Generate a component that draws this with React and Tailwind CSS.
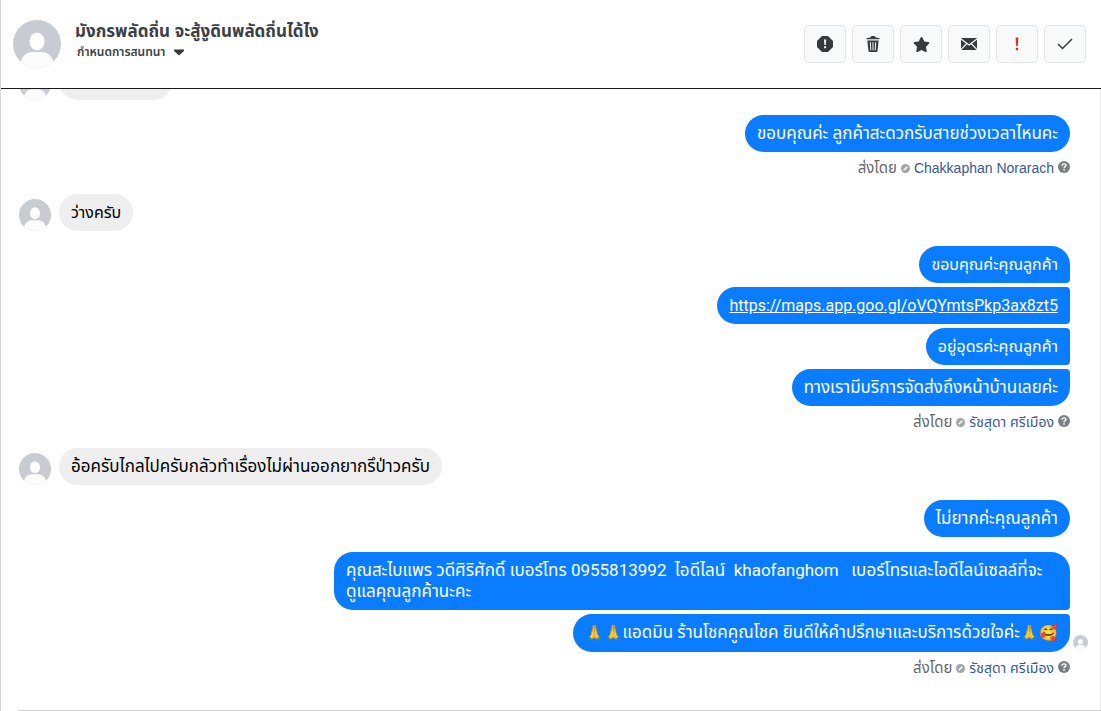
import { FaStar } from "react-icons/fa";

const threads = [
  { id: 1, side: "in", messages: [{ text: "" }] },
  {
    id: 2,
    side: "out",
    sender: "Chakkaphan Norarach",
    messages: [{ text: "ขอบคุณค่ะ ลูกค้าสะดวกรับสายช่วงเวลาไหนคะ" }],
  },
  { id: 3, side: "in", messages: [{ text: "ว่างครับ", small: true }] },
  {
    id: 4,
    side: "out",
    sender: "รัชสุดา ศรีเมือง",
    messages: [
      { text: "ขอบคุณค่ะคุณลูกค้า", small: true },
      { text: "https://maps.app.goo.gl/oVQYmtsPkp3ax8zt5", link: true, small: true },
      { text: "อยู่อุดรค่ะคุณลูกค้า", small: true },
      { text: "ทางเรามีบริการจัดส่งถึงหน้าบ้านเลยค่ะ" },
    ],
  },
  { id: 5, side: "in", messages: [{ text: "อ้อครับไกลไปครับกลัวทำเรื่องไม่ผ่านออกยากรึป่าวครับ" }] },
  { id: 6, side: "out", messages: [{ text: "ไม่ยากค่ะคุณลูกค้า" }] },
  {
    id: 7,
    side: "out",
    sender: "รัชสุดา ศรีเมือง",
    seen: true,
    messages: [
      {
        text: "คุณสะไบแพร วดีศิริศักดิ์ เบอร์โทร 0955813992  ไอดีไลน์  khaofanghom   เบอร์โทรและไอดีไลน์เซลล์ที่จะ\nดูแลคุณลูกค้านะคะ",
        wide: true,
      },
      {
        before: "🙏🙏",
        text: "แอดมิน ร้านโชคคูณโชค ยินดีให้คำปรึกษาและบริการด้วยใจค่ะ",
        after: "🙏🥰",
      },
    ],
  },
];

function Avatar({ className }) {
  return (
    <svg viewBox="0 0 48 48" className={`shrink-0 rounded-full ${className}`} aria-hidden="true">
      <rect width="48" height="48" fill="#c8cbd1" />
      <ellipse cx="24" cy="21.5" rx="7.5" ry="9" fill="#fff" />
      <path d="M7 44C9 35 14 32 20 32h8c6 0 11 3 13 12v4H7z" fill="#fcfcfd" />
    </svg>
  );
}

function ToolButton({ label, children }) {
  return (
    <button
      type="button"
      aria-label={label}
      className="flex h-[38px] w-[42px] items-center justify-center rounded border border-[#e4e6ea] bg-[#f8f9fb] text-[#37393c]"
    >
      {children}
    </button>
  );
}

function Header() {
  return (
    <header className="flex h-[89px] shrink-0 items-start justify-between border-b border-[#18191b] pl-3 pr-[15px]">
      <div className="flex pt-5">
        <Avatar className="size-12" />
        <div className="ml-[14px]">
          <h1 className="text-[17px] leading-6 font-bold text-[#3b3f46]">
            มังกรพลัดถิ่น จะสู้งูดินพลัดถิ่นได้ไง
          </h1>
          <button type="button" className="ml-[2px] flex items-center gap-2 text-[12px] leading-4 font-semibold text-[#3b3f46]">
            กำหนดการสนทนา
            <svg viewBox="0 0 12 7" className="h-[7px] w-3" aria-hidden="true">
              <path d="M1 .5h10v1.500L6 6.500 1 2z" fill="#37393c" />
            </svg>
          </button>
        </div>
      </div>

      <div className="flex gap-[6px] pt-[25px]">
        <ToolButton label="สแปม">
          <svg viewBox="0 0 16 16" className="size-4" fill="currentColor">
            <path d="M5 0h6l5 5v6l-5 5H5l-5-5V5z" />
            <path d="M7 3.500h2.200l-.4 5.500H7.400zM7.100 10.300h2v2h-2z" fill="#f8f9fb" />
          </svg>
        </ToolButton>
        <ToolButton label="ลบ">
          <svg viewBox="0 0 16 16" className="size-4" fill="currentColor">
            <path d="M1.500 2.200 5.800 1.200 6.300 0h3.400l.5 1.200 4.300 1v1h-13z" />
            <path d="M2.300 4.500h11.400L12.500 15q-.1 1-1.100 1H4.600q-1 0-1.100-1z" />
            <path d="M5.300 6.200l.5 8.200M8 6.200v8.200M10.700 6.200l-.5 8.200" stroke="#f8f9fb" strokeWidth="1" />
          </svg>
        </ToolButton>
        <ToolButton label="ติดดาว">
          <FaStar size={17} />
        </ToolButton>
        <ToolButton label="ทำเครื่องหมายว่ายังไม่อ่าน">
          <svg viewBox="0 0 16 12" className="h-3 w-4">
            <rect width="16" height="12" rx="1" fill="currentColor" />
            <path d="M0 1l8 6 8-6M0 11.500l5.800-6M16 11.500l-5.800-6" fill="none" stroke="#f8f9fb" strokeWidth="1.200" />
          </svg>
        </ToolButton>
        <ToolButton label="ติดตามผล">
          <svg viewBox="0 0 6 14" className="h-[14px] w-[6px]" fill="#d9321f">
            <path d="M1.600.500h2.800L3.800 9H2.200zM1.800 10.800h2.400v2.400H1.800z" />
          </svg>
        </ToolButton>
        <ToolButton label="เสร็จสิ้น">
          <svg viewBox="0 0 16 12" className="h-3 w-4" fill="none" stroke="currentColor" strokeWidth="1.500">
            <path d="M1 6l4.500 4.500L15 1" />
          </svg>
        </ToolButton>
      </div>
    </header>
  );
}

function SentBy({ name }) {
  return (
    <div className="flex h-[42px] items-start justify-end gap-1 pt-[6px] font-[Arial,'Liberation_Sans','Noto_Sans_Thai',sans-serif] text-[14px] leading-5 text-[#65676b]">
      <span className="text-[15px]">ส่งโดย</span>
      <svg viewBox="0 0 10 10" className="mt-[6px] size-[9px]" aria-hidden="true">
        <circle cx="5" cy="5" r="5" fill="#a3a5a9" />
        <path d="M3 7l4-4" stroke="#fff" strokeWidth="1.800" />
      </svg>
      <a href="#" className="text-[#385898]">{name}</a>
      <button type="button" aria-label="ช่วยเหลือ" className="mt-[3px]">
        <svg viewBox="0 0 12 12" className="size-3" aria-hidden="true">
          <circle cx="6" cy="6" r="6" fill="#7b7f85" />
          <path d="M4 4.700Q4 2.900 6 2.900t2 1.600c0 1.200-2 1.200-2 2.700" fill="none" stroke="#fff" strokeWidth="1.400" />
          <rect x="5.300" y="8.200" width="1.500" height="1.500" fill="#fff" />
        </svg>
      </button>
    </div>
  );
}

function Incoming({ thread }) {
  return (
    <div className="mb-[15px] flex items-end gap-2 pl-[18px]">
      <Avatar className="size-8" />
      {thread.messages.map((m, i) => (
        <p
          key={i}
          className={`rounded-[19px] bg-[#eeeeee] px-3 py-2 text-black ${m.small ? "text-[16px]" : "text-[17px]"} ${m.text ? "" : "h-[37px] w-[113px]"}`}
        >
          {m.text}
        </p>
      ))}
    </div>
  );
}

function bubbleCorners(index, count) {
  if (count === 1) return "rounded-[19px]";
  if (index === 0) return "rounded-[19px] rounded-br";
  if (index === count - 1) return "rounded-[19px] rounded-tr";
  return "rounded-[19px] rounded-r";
}

function Outgoing({ thread }) {
  const count = thread.messages.length;
  return (
    <div className={thread.sender ? "pr-[30px]" : "mb-[15px] pr-[30px]"}>
      <div className="relative flex flex-col items-end gap-1">
        {thread.messages.map((m, i) => (
          <p
            key={i}
            className={`bg-[#0a7cff] px-3 py-2 whitespace-pre-wrap text-white ${m.small ? "text-[16px]" : "text-[17px]"} ${bubbleCorners(i, count)} ${m.wide ? "w-[736px] max-w-full" : ""}`}
          >
            {m.before && <span className="text-[15px]">{m.before}</span>}
            {m.link ? (
              <a href={m.text} className="underline">{m.text}</a>
            ) : (
              m.text
            )}
            {m.after && <span className="text-[15px]">{m.after}</span>}
          </p>
        ))}
        {thread.seen && <Avatar className="absolute -right-[18px] bottom-[2px] size-[15px]" />}
      </div>
      {thread.sender && <SentBy name={thread.sender} />}
    </div>
  );
}

export default function App() {
  return (
    <div className="flex h-screen flex-col border-l border-[#d8d8da] bg-white font-[Arial,'Liberation_Sans','Noto_Sans_Thai',sans-serif]">
      <Header />
      <main className="flex min-h-0 flex-1 flex-col justify-end overflow-hidden border-r border-[#ebebed] pb-4 font-[Roboto,'Noto_Sans_Thai',sans-serif] leading-[21px]">
        {threads.map((t) =>
          t.side === "in" ? <Incoming key={t.id} thread={t} /> : <Outgoing key={t.id} thread={t} />
        )}
      </main>
      <footer className="ml-[17px] h-px shrink-0 bg-[#d0d1d4]" />
    </div>
  );
}
